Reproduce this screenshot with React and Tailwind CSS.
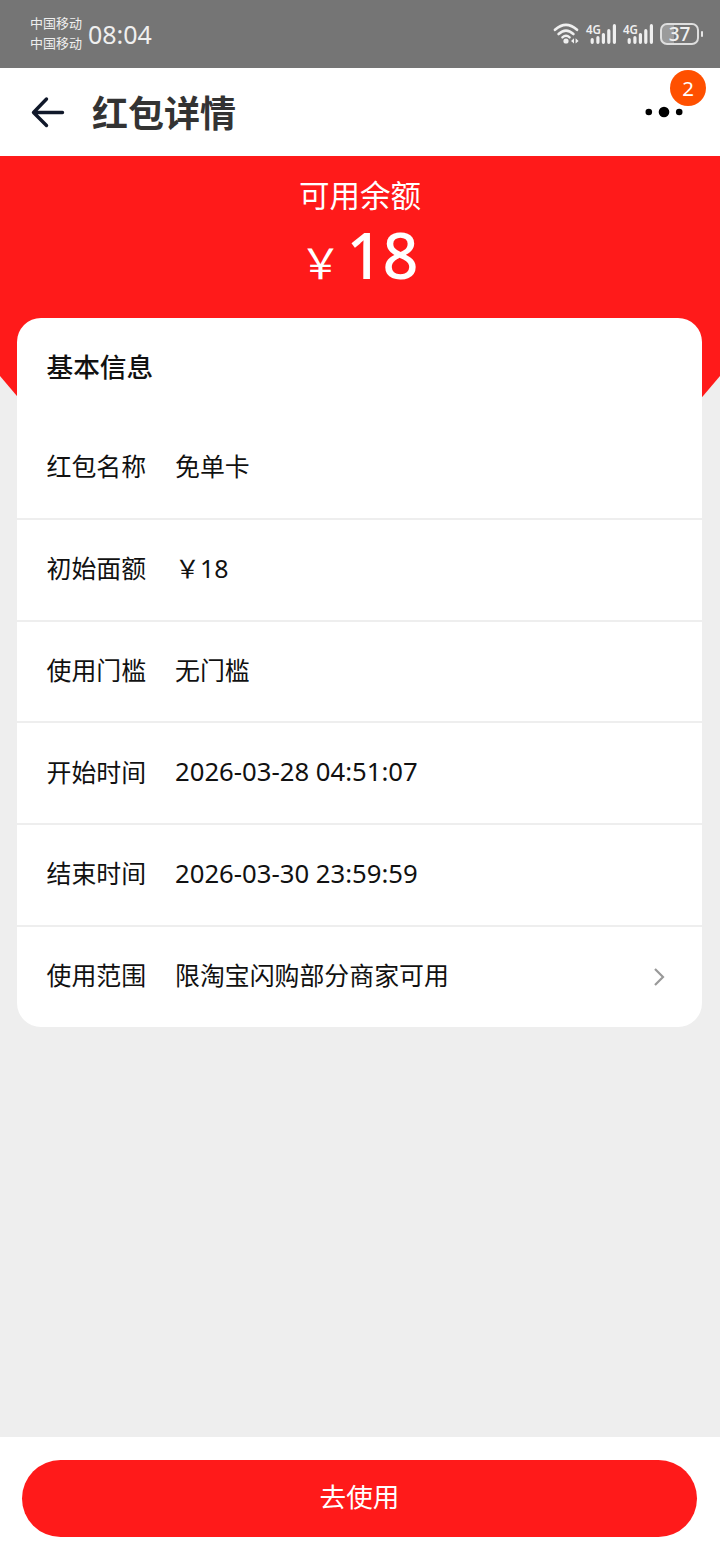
import React from 'react'

const ROWS = [
  { label:'红包名称', value:'免单卡' },
  { label:'初始面额', value:'\uFFE518' },
  { label:'使用门槛', value:'无门槛' },
  { label:'开始时间', value:'2026-03-28 04:51:07' },
  { label:'结束时间', value:'2026-03-30 23:59:59' },
  { label:'使用范围', value:'限淘宝闪购部分商家可用', link:true },
]

function Wifi() {
  return (
    <svg width="28" height="24" viewBox="0 0 28 24" fill="none" stroke="#efefef" strokeLinecap="round">
      <path d="M2 7.8Q13 -2 24 7.8" strokeWidth="2.6" />
      <path d="M5.6 12Q13 5.2 20.4 12" strokeWidth="2.6" />
      <path d="M9.4 15.4Q13 12 16.6 15.4" strokeWidth="2.4" />
      <circle cx="13" cy="19" r="2.6" fill="#efefef" stroke="none" />
      <path d="M21 16.2v5.4l-3-2.7zM22.6 16.2v5.4l3-2.7z" fill="#efefef" stroke="none" />
    </svg>
  )
}

function Signal() {
  return (
    <svg className="overflow-visible" width="31" height="32" viewBox="0 -4 31 32">
      <text x="0" y="11.6" fontSize="12.5" fontWeight="600" textLength="15" lengthAdjust="spacingAndGlyphs" fill="#efefef">4G</text>
      <g stroke="#efefef" strokeWidth="3.2" strokeLinecap="round">
        <path d="M6.2 17.7V20.3M11.9 15.7V20.3M17.4 12.5V20.3M22.8 8.7V20.3M28.4 3.7V20.3" />
      </g>
    </svg>
  )
}

function StatusBar() {
  return (
    <div className="flex h-[68px] items-center bg-[#757575] pl-[30px] pr-[17px] text-[#efefef]">
      <div className="pb-[2px] text-[13px] leading-5">
        <div>中国移动</div>
        <div>中国移动</div>
      </div>
      <span className="ml-[6px] text-[25px] leading-none">08:04</span>
      <div className="ml-auto flex items-center">
        <Wifi />
        <span className="ml-[5px]"><Signal /></span>
        <span className="ml-[6px]"><Signal /></span>
        <div className="ml-[6px] flex h-[22px] w-[39px] items-center justify-center rounded-[7px] border-2 border-[#dedede] bg-[linear-gradient(90deg,#9b9b9b_37%,transparent_37%)] bg-origin-border text-[19px] font-medium leading-none">37</div>
        <div className="ml-[2px] h-[6px] w-[2px] rounded-full bg-[#e6e6e6]"></div>
      </div>
    </div>
  )
}

function NavBar() {
  return (
    <div className="flex h-[88px] items-center bg-white pl-[31px] pr-[37px]">
      <svg width="34" height="32" viewBox="0 0 34 32" fill="none" stroke="#10182a" strokeWidth="3.4" strokeLinecap="round" strokeLinejoin="round">
        <path d="M31.5 16.5H2.5M15.5 3L2.5 16.5L15.5 29.5" />
      </svg>
      <h1 className="ml-[27px] pt-[4px] text-[36px] font-bold leading-none text-[#333]">红包详情</h1>
      <div className="relative ml-auto">
        <svg width="38" height="12" viewBox="0 0 38 12" fill="#000">
          <circle cx="3.8" cy="6" r="3.3" />
          <circle cx="19" cy="6" r="5.3" />
          <circle cx="34.2" cy="6" r="3.3" />
        </svg>
        <span className="absolute left-[25px] top-[-36px] flex size-9 items-center justify-center rounded-full bg-[#ff5000] pt-px text-[20.5px] leading-none text-white">2</span>
      </div>
    </div>
  )
}

export default function App() {
  return (
    <div className="flex h-[1560px] w-[720px] flex-col overflow-hidden bg-[#eee] font-['Noto_Sans','Noto_Sans_CJK_SC',sans-serif]" lang="zh-CN">
      <StatusBar />
      <NavBar />

      <main className="relative flex-1">
        {/* Curved red backdrop */}
        <svg className="absolute left-0 top-0" width="720" height="400" viewBox="0 0 720 400">
          <path d="M0 0H720V220A461 461 0 0 1 0 220Z" fill="#ff1a1a" />
        </svg>

        <div className="relative">
          {/* Balance */}
          <div className="flex h-[162px] flex-col items-center pt-[20px] text-white">
            <div className="text-[30.5px] leading-[38px]">可用余额</div>
            <div className="flex items-baseline pr-[2px] leading-[82px]">
              <span className="text-[42px]">{'\uFFE5'}</span>
              <span className="ml-[5px] text-[63px] font-medium">18</span>
            </div>
          </div>

          {/* Details */}
          <section className="ml-[17px] mr-[18px] h-[709px] overflow-hidden rounded-[24px] bg-white text-[#111]">
            <h2 className="flex h-[100px] items-center pb-[2px] pl-[29.5px] text-[26.7px] font-medium leading-none">基本信息</h2>
            {ROWS.map(row => (
              <div key={row.label} className="flex h-[101.8px] items-center border-b-2 border-[#eee] pb-[2.5px] pl-[29.5px] pr-[36px] text-[24.9px] leading-none last:border-b-0 last:pb-[4px]">
                <span className="w-[128.5px]">{row.label}</span>
                <span className={row.value.startsWith('2026') ? 'text-[25.7px]' : 'text-[24.9px]'}>{row.value}</span>
                {row.link && (
                  <svg className="ml-auto mt-[2px]" width="14" height="20" viewBox="0 0 14 20" fill="none" stroke="#999" strokeWidth="2.2">
                    <path d="M3 2L11 10L3 18" />
                  </svg>
                )}
              </div>
            ))}
          </section>
        </div>
      </main>

      <footer className="h-[123px] bg-white pl-[22px] pr-[23px] pt-[23px]">
        <button className="flex h-[77px] w-full items-center justify-center rounded-full bg-[#ff1a1a] pb-[2px] text-[26.6px] leading-none text-white">去使用</button>
      </footer>
    </div>
  )
}
